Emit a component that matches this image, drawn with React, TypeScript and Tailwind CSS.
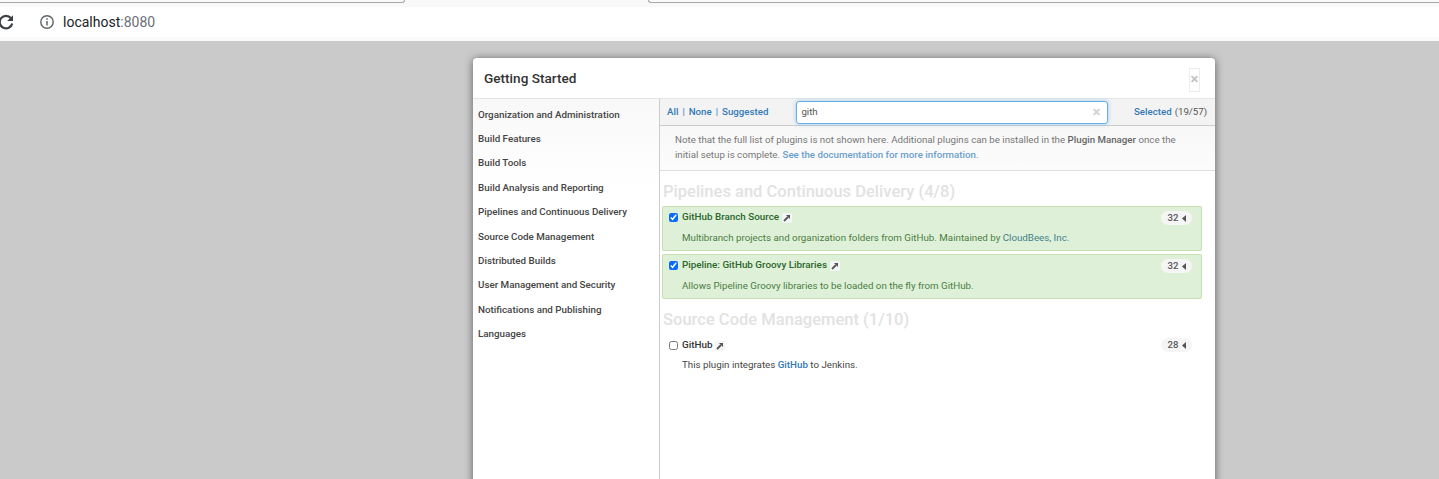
const categories = [
  "Organization and Administration",
  "Build Features",
  "Build Tools",
  "Build Analysis and Reporting",
  "Pipelines and Continuous Delivery",
  "Source Code Management",
  "Distributed Builds",
  "User Management and Security",
  "Notifications and Publishing",
  "Languages",
];

const ExternalArrow = () => (
  <span className="ml-[3px] inline-flex h-[10px] w-[10px] items-center justify-center rounded-[2px] bg-[#f5f5f5]">
    <svg width="8" height="8" viewBox="0 0 8 8">
      <path d="M1 7 L5 3" stroke="#555" strokeWidth="1.8" />
      <path d="M3 1 H7 V5 Z" fill="#555" />
    </svg>
  </span>
);

const Count = ({ value }: { value: number }) => (
  <span className="flex h-[14px] w-[31px] items-center justify-center gap-[4px] rounded-full bg-[#f5f5f5] pl-[1px] text-[9.6px] font-medium text-[#555]">
    {value}
    <svg width="4" height="7" viewBox="0 0 4 7">
      <path d="M4 0 V7 L0 3.5 Z" fill="#555" />
    </svg>
  </span>
);

const Plugin = ({
  name,
  count,
  checked,
  children,
}: {
  name: string;
  count: number;
  checked?: boolean;
  children: React.ReactNode;
}) => (
  <div
    className={`relative mr-[13px] ml-[2px] h-[45px] rounded-[2px] border pt-[4px] pl-[6px] ${
      checked ? "border-[#c5dfb0] bg-[#dff0d8] text-[#4a7d3f]" : "border-transparent text-[#444]"
    }`}
  >
    <div className="flex h-[13px] items-center text-[9.85px] font-medium">
      <input
        type="checkbox"
        defaultChecked={checked}
        className={`mr-[4px] h-[9px] w-[9px] ${checked ? "accent-[#0a6cf5]" : ""}`}
      />
      <span className={checked ? "text-[#2b662c]" : "text-[#333]"}>{name}</span>
      <ExternalArrow />
    </div>
    <p className={`ml-[13px] text-[9.75px] leading-[14px] ${checked ? "mt-[7px]" : "mt-[6px]"}`}>{children}</p>
    <div className={`absolute right-[9px] ${checked ? "top-[4px]" : "top-[3px]"}`}>
      <Count value={count} />
    </div>
  </div>
);

export default function App() {
  return (
    <div className="flex h-[479px] flex-col overflow-hidden bg-[#cacaca] font-['Roboto',sans-serif]">
      {/* browser chrome */}
      <div className="h-[41px] shrink-0 bg-[#fafafa]">
        <div className="flex h-[7px] bg-[#f9f9f9]">
          <div className="h-[3px] w-[405px] rounded-br-[6px] border-r border-b border-[#a8a8a8]" />
          <div className="w-[243px]" />
          <div className="h-[3px] flex-1 rounded-bl-[6px] border-b border-l border-[#a8a8a8]" />
        </div>
        <div className="flex h-[30px] items-center bg-white">
          <svg width="18" height="18" viewBox="0 0 18 18" className="-ml-[3px] shrink-0">
            <path d="M14 5.2 A6.3 6.3 0 1 0 15.2 10.5" fill="none" stroke="#3c4043" strokeWidth="2.2" />
            <path d="M16 2.2 V8 H10.2 Z" fill="#3c4043" />
          </svg>
          <div className="ml-[14px] flex h-[30px] flex-1 items-center pl-[10px] text-[14px]">
            <svg width="16" height="16" viewBox="0 0 16 16" className="shrink-0">
              <circle cx="8" cy="8" r="6.2" fill="none" stroke="#5f6368" strokeWidth="1.4" />
              <path d="M8 7 V11.6 M8 4.2 V5.7" stroke="#5f6368" strokeWidth="1.5" />
            </svg>
            <span className="ml-[8px] text-[#202124]">localhost</span>
            <span className="text-[#6b7075]">:8080</span>
          </div>
        </div>
      </div>

      {/* setup dialog */}
      <div className="mt-[17px] ml-[473px] flex h-[500px] w-[742px] shrink-0 flex-col rounded-t-[4px] bg-white shadow-[0_1px_9px_rgba(0,0,0,0.55)]">
        <div className="flex h-[41px] shrink-0 items-center justify-between border-b border-[#e5e5e5] pl-[11px]">
          <h1 className="text-[13.6px] font-medium text-[#333]">Getting Started</h1>
          <span className="mt-[3px] mr-[15px] flex h-[24px] w-[11px] items-center justify-center border border-[#ececec] text-[15px] font-bold text-[#c4c4c4]">
            ×
          </span>
        </div>
        <div className="flex min-h-0 flex-1">
          <ul className="w-[187px] shrink-0 border-r border-[#ccc] bg-gradient-to-b from-[#f8f8f8] to-white to-[90px] pt-[3.8px] pl-[5px]">
            {categories.map((c) => (
              <li key={c} className="flex h-[24.38px] items-center text-[9.8px] font-medium text-[#444]">
                {c}
              </li>
            ))}
          </ul>
          <div className="min-w-0 flex-1">
            <div className="flex h-[27px] items-center border-b border-[#ccc] bg-[#f3f3f3] text-[9.7px] font-medium text-[#337ab7]">
              <span className="ml-[7px]">All</span>
              <span className="mx-[4px] font-normal">|</span>
              <span>None</span>
              <span className="mx-[4px] font-normal">|</span>
              <span>Suggested</span>
              <div className="ml-[28px] flex h-[23px] w-[312px] items-center justify-between rounded-[3px] border border-[#66afe9] bg-white pr-[7px] pl-[4px] text-[9.7px] font-normal text-[#555] shadow-[0_0_4px_rgba(102,175,233,0.6)]">
                gith
                <span className="text-[15px] font-bold text-[#d2d2d2]">×</span>
              </div>
              <span className="ml-[25.6px]">Selected</span>
              <span className="ml-[3px] font-normal text-[#555]">(19/57)</span>
            </div>
            <div className="h-[45px] border-b border-[#ddd] bg-gradient-to-b from-[#f7f7f7] to-[#fcfcfc] pt-[6px] pl-[15px] text-[9.73px] leading-[15px] text-[#777]">
              <p>
                Note that the full list of plugins is not shown here. Additional plugins can be installed in the{" "}
                <b className="font-medium text-[#666]">Plugin Manager</b> once the
              </p>
              <p>
                initial setup is complete.{" "}
                <a className="font-medium text-[#6a9fcc]">See the documentation for more information</a>.
              </p>
            </div>
            <h2 className="mt-[11px] mb-[4px] ml-[3px] text-[16.55px] leading-[20px] font-medium text-[#e2e2e2]">
              Pipelines and Continuous Delivery (4/8)
            </h2>
            <Plugin name="GitHub Branch Source" count={32} checked>
              Multibranch projects and organization folders from GitHub. Maintained by{" "}
              <span className="text-[#41808a]">CloudBees, Inc.</span>
            </Plugin>
            <div className="h-[3px]" />
            <Plugin name="Pipeline: GitHub Groovy Libraries" count={32} checked>
              Allows Pipeline Groovy libraries to be loaded on the fly from GitHub.
            </Plugin>
            <h2 className="mt-[11px] mb-[4px] ml-[3px] text-[16.55px] leading-[20px] font-medium text-[#e2e2e2]">
              Source Code Management (1/10)
            </h2>
            <Plugin name="GitHub" count={28}>
              This plugin integrates <span className="font-medium text-[#337ab7]">GitHub</span> to Jenkins.
            </Plugin>
          </div>
        </div>
      </div>
    </div>
  );
}
